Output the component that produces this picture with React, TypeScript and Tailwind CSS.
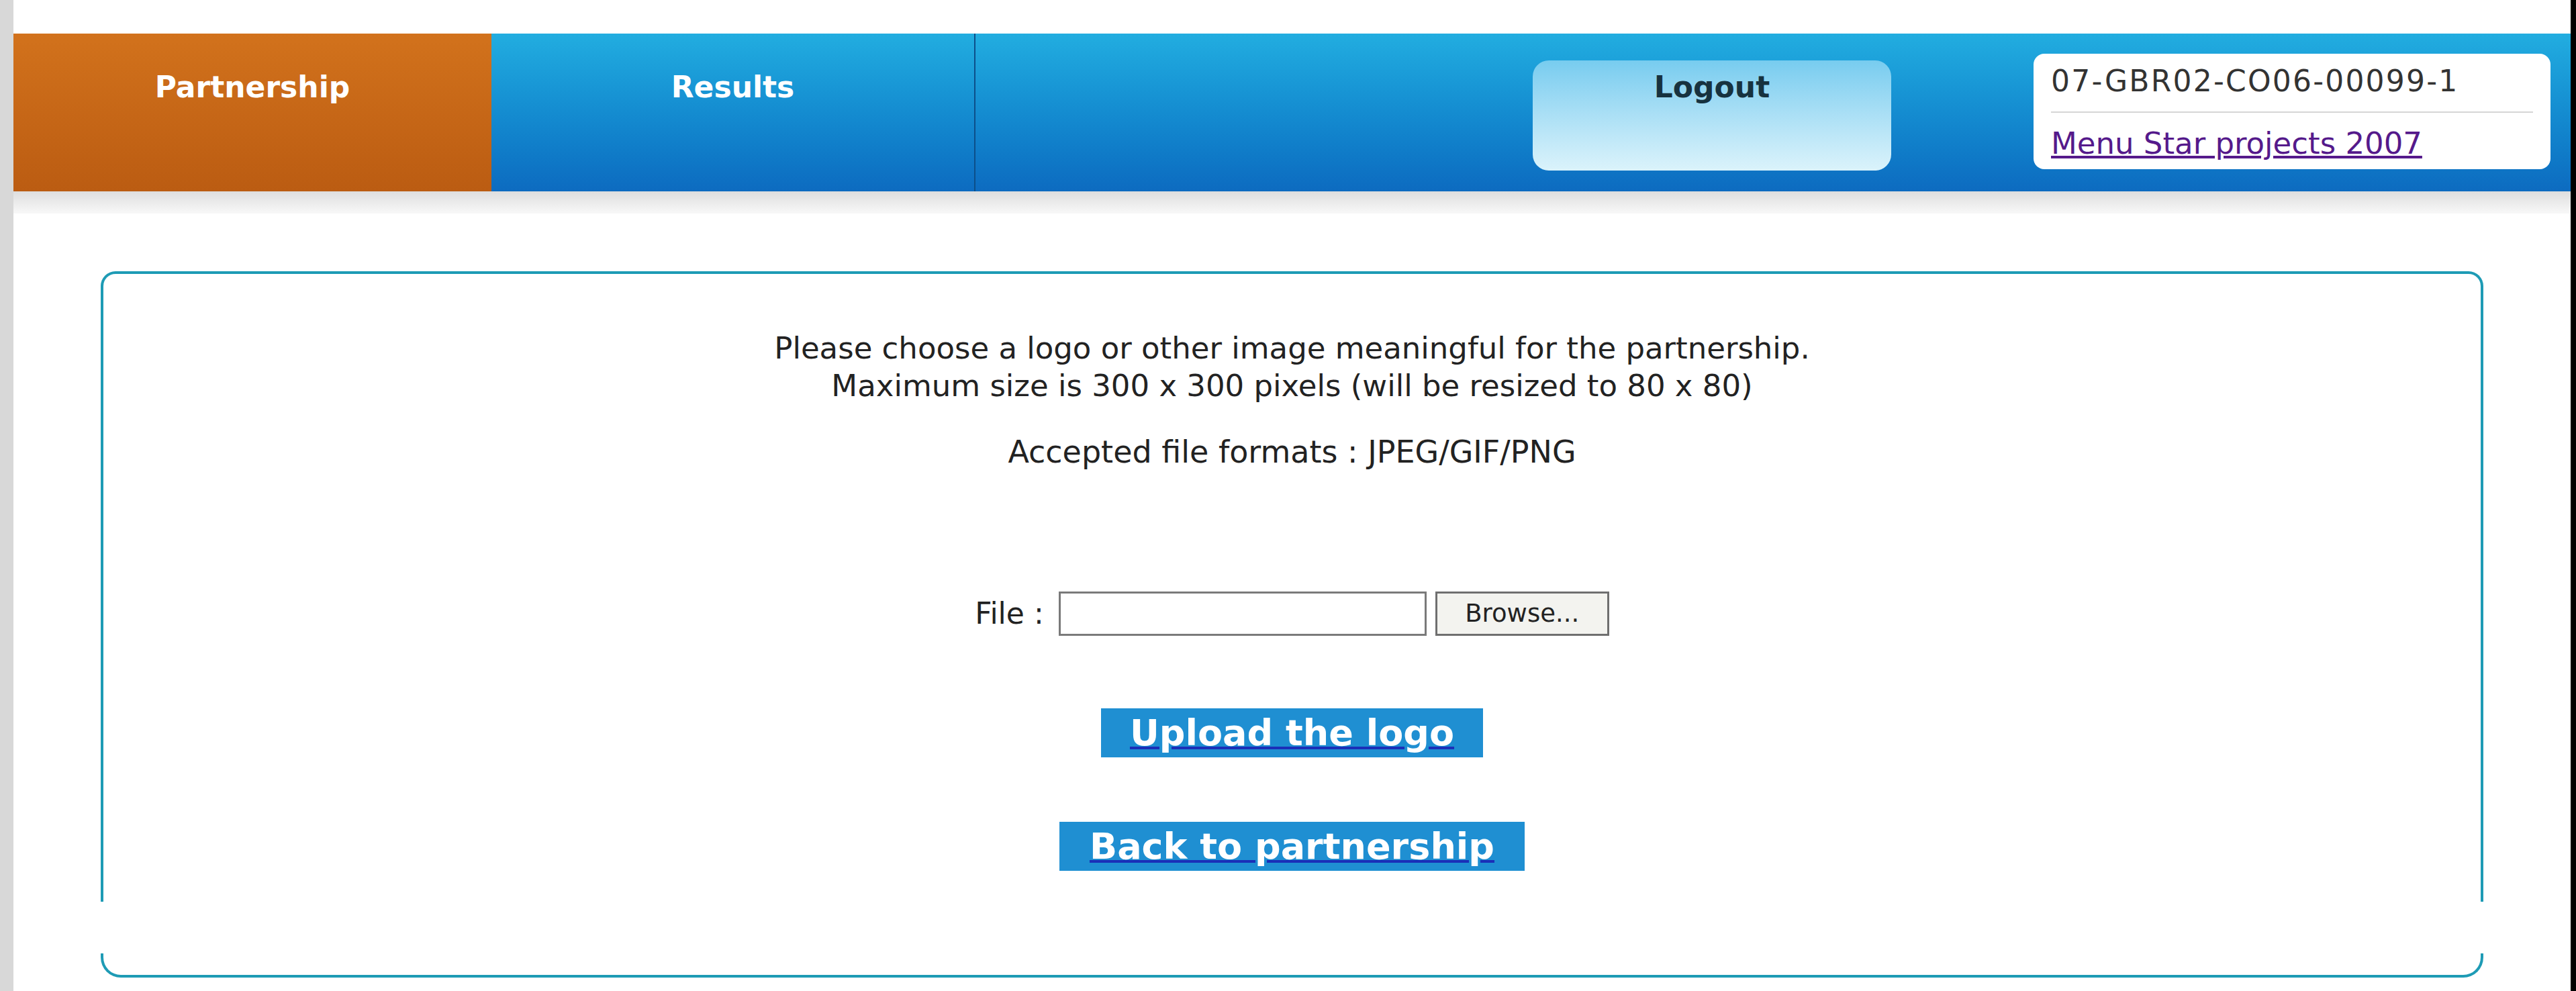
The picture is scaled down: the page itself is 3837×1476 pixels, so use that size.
import React from 'react';

const font = "font-['DejaVu_Sans',Verdana,sans-serif]";

const Header: React.FC = () => (
  <div className="flex h-[235px] bg-gradient-to-b from-[#22ade0] to-[#0d6bc0]">
    <div className="w-[712px] bg-gradient-to-b from-[#d2721c] to-[#bb5c12] text-center pt-[53px]">
      <span className="text-[44px] leading-[54px] font-bold text-white">Partnership</span>
    </div>
    <div className="w-[721px] border-r-[2px] border-[#0c4f8a] text-center pt-[53px]">
      <span className="text-[44px] leading-[54px] font-bold text-white">Results</span>
    </div>
    <div className="flex-1" />
    <div className="w-[534px] h-[164px] mt-[40px] rounded-[24px] bg-gradient-to-b from-[#77ccef] to-[#dbf3fb] text-center pt-[13px]">
      <span className="text-[44px] leading-[54px] font-bold text-[#17323f]">Logout</span>
    </div>
    <div className="w-[770px] h-[172px] mt-[30px] ml-[212px] mr-[30px] rounded-[16px] bg-white flex flex-col px-[26px]">
      <div className="h-[88px] border-b-[2px] border-[#d6d6d6] pt-[14px] text-[44px] leading-[54px] tracking-[2.2px] text-[#333]">
        07-GBR02-CO06-00099-1
      </div>
      <div className="flex-1 pt-[19px]">
        <a href="#" className="text-[45px] leading-[54px] text-[#551a8b] underline">
          Menu Star projects 2007
        </a>
      </div>
    </div>
  </div>
);

const UploadPanel: React.FC = () => (
  <div className="mx-[130px] mt-[86px] h-[939px] border-[4px] border-b-0 border-[#1e9bb5] rounded-t-[22px]">
    <div className="flex flex-col items-center pt-[83px] text-[45px] leading-[56px] text-[#222]">
      <p>Please choose a logo or other image meaningful for the partnership.</p>
      <p>Maximum size is 300 x 300 pixels (will be resized to 80 x 80)</p>
      <p className="mt-[42px] text-[46px]">Accepted file formats : JPEG/GIF/PNG</p>
      <div className="mt-[180px] flex items-center h-[66px] text-[44px]">
        <span className="mr-[22px]">File :</span>
        <input type="text" readOnly className="w-[548px] h-[66px] border-[3px] border-[#7a7a7a] bg-white" />
        <div className="ml-[13px] w-[259px] h-[66px] border-[3px] border-[#6f6f6f] bg-[#f3f3ef] flex items-center justify-center text-[37px] text-[#222]">
          Browse...
        </div>
      </div>
      <button className="mt-[108px] h-[73px] px-[43px] bg-[#1f8fd2] text-white font-bold text-[54px] leading-[60px] underline decoration-[#1a2fb8] decoration-[4px]">
        Upload the logo
      </button>
      <button className="mt-[96px] h-[73px] px-[45px] bg-[#1f8fd2] text-white font-bold text-[54px] leading-[60px] underline decoration-[#1a2fb8] decoration-[4px]">
        Back to partnership
      </button>
    </div>
  </div>
);

export default function App() {
  return (
    <div className={`${font} flex h-[1476px] w-full overflow-hidden bg-white`}>
      <div className="w-[20px] bg-[#d8d8d8]" />
      <div className="flex-1 flex flex-col">
        <div className="h-[50px] bg-white" />
        <Header />
        <div className="h-[33px] bg-gradient-to-b from-[#dedede] to-[#f8f8f8]" />
        <UploadPanel />
        <div className="mx-[130px] mt-[77px] h-[36px] border-[4px] border-t-0 border-[#1e9bb5] rounded-b-[30px]" />
      </div>
      <div className="w-[8px] bg-black" />
    </div>
  );
}
